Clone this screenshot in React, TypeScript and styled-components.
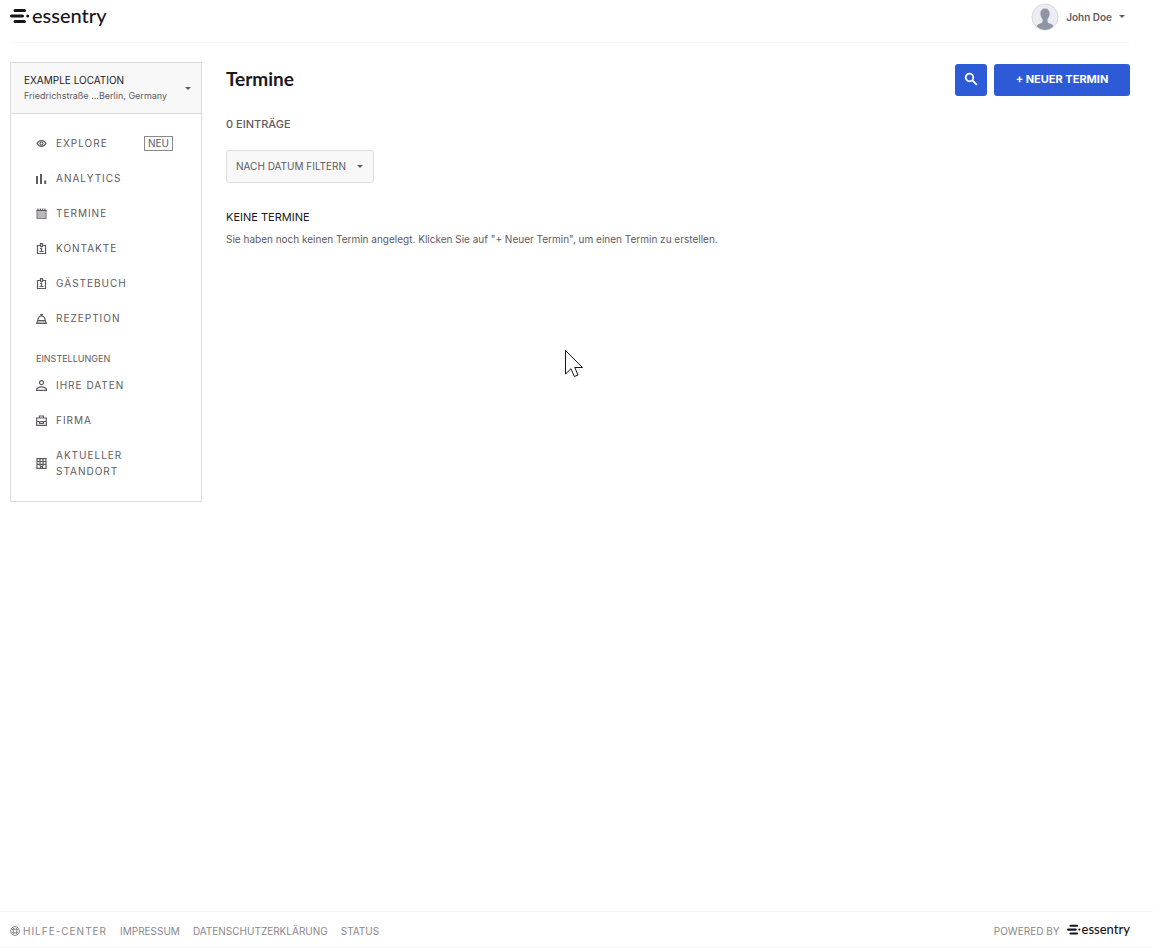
import React from "react";
import styled, { createGlobalStyle } from "styled-components";

const GlobalStyle = createGlobalStyle`
  *, *::before, *::after { box-sizing: border-box; }
  body {
    margin: 0;
    background: #fff;
    color: #5f5a61;
    font-family: Inter, "Liberation Sans", sans-serif;
    font-size: 10px;
    line-height: 16px;
  }
  h1, h2, p, ul { margin: 0; padding: 0; }
  ul { list-style: none; }
  button, select { font: inherit; color: inherit; cursor: pointer; }
  a { color: inherit; text-decoration: none; }
  svg { display: block; flex: none; }
`;

const Page = styled.div`
  position: relative;
  display: flex;
  flex-direction: column;
  min-height: 100vh;
`;

const Header = styled.header`
  display: flex;
  align-items: center;
  justify-content: space-between;
  height: 43px;
  margin: 0 23px 0 10px;
  padding-bottom: 9px;
  border-bottom: 1px solid #f6f6f6;
`;

const Brand = styled.a<{ $small?: boolean }>`
  display: flex;
  align-items: center;
  gap: ${(p) => (p.$small ? 1 : 2)}px;
  padding-bottom: 2px;
  color: #17151c;
  font-family: Lato, sans-serif;
  font-size: ${(p) => (p.$small ? 13 : 20)}px;
  font-weight: 500;
  line-height: ${(p) => (p.$small ? 16 : 24)}px;
`;

const BrandName = styled.span`
  padding-bottom: 2px;
`;

const UserButton = styled.button`
  display: flex;
  align-items: center;
  gap: 7px;
  padding: 0 5px 0 0;
  border: 0;
  background: none;
  font-weight: 600;
`;

const Body = styled.div`
  display: flex;
  flex: 1;
  align-items: flex-start;
  gap: 24px;
  padding: 19px 23px 40px 10px;
`;

const Sidebar = styled.aside`
  flex: none;
  width: 192px;
  border: 1px solid #dcdcdc;
`;

const LocationButton = styled.button`
  display: flex;
  align-items: center;
  justify-content: space-between;
  width: 100%;
  height: 51px;
  padding: 0 10px 0 13px;
  border: 0;
  border-bottom: 1px solid #dcdcdc;
  background: #f8f8f8;
  text-align: left;
`;

const LocationName = styled.span`
  display: block;
  color: #1d1a24;
`;

const LocationAddress = styled.span`
  display: block;
  font-size: 9px;
`;

const Nav = styled.nav`
  padding: 12px 25px;
`;

const NavLink = styled.a`
  display: flex;
  align-items: center;
  gap: 9px;
  padding: 9px 0 10px;
  letter-spacing: 1px;
`;

const NavText = styled.span`
  flex: 1;
`;

const Badge = styled.span`
  margin-right: 3px;
  padding: 0 3px;
  border: 1px solid #8d888e;
  line-height: 13px;
  letter-spacing: 0;
`;

const NavHeading = styled.h2`
  margin: 15px 0 1px;
  font-size: 9px;
  font-weight: 400;
`;

const Main = styled.main`
  flex: 1;
  min-width: 0;
`;

const TitleRow = styled.div`
  display: flex;
  align-items: center;
  justify-content: space-between;
  height: 35px;
`;

const Title = styled.h1`
  padding-bottom: 2px;
  color: #1a1722;
  font-family: Lato, sans-serif;
  font-size: 19px;
  font-weight: 700;
  line-height: 24px;
`;

const Actions = styled.div`
  display: flex;
  gap: 7px;
`;

const PrimaryButton = styled.button<{ $icon?: boolean }>`
  display: flex;
  align-items: center;
  justify-content: center;
  width: ${(p) => (p.$icon ? 32 : 136)}px;
  height: 32px;
  padding: 0 0 1px;
  border: 0;
  border-radius: 3px;
  background: #2d5bd7;
  color: #fff;
  font-size: 11px;
  font-weight: 700;
`;

const Count = styled.p`
  margin-top: 19px;
  font-size: 11px;
  font-weight: 500;
`;

const FilterField = styled.div`
  position: relative;
  width: 148px;
  margin: 18px 0 26px;
`;

const FilterSelect = styled.select`
  display: block;
  width: 100%;
  height: 33px;
  padding: 0 24px 1px 9px;
  border: 1px solid #dedede;
  border-radius: 3px;
  background: #f8f8f8;
  appearance: none;
`;

const FilterCaret = styled.span`
  position: absolute;
  top: 15px;
  right: 11px;
  pointer-events: none;
`;

const EmptyTitle = styled.h2`
  color: #1a1722;
  font-size: 11px;
  font-weight: 400;
`;

const EmptyText = styled.p`
  margin-top: 6px;
`;

const Footer = styled.footer`
  display: flex;
  align-items: center;
  justify-content: space-between;
  height: 37px;
  padding: 3px 23px 0 10px;
  border: solid #f6f6f6;
  border-width: 1px 0;
  color: #8b878d;
`;

const FooterLinks = styled.div`
  display: flex;
  align-items: center;
  gap: 13px;
`;

const HelpLink = styled.a`
  display: flex;
  align-items: center;
  gap: 3px;
  letter-spacing: 1px;
`;

const PoweredBy = styled.div`
  display: flex;
  align-items: center;
  gap: 7px;
`;

const Pointer = styled.svg`
  position: absolute;
  top: 350px;
  left: 565px;
  pointer-events: none;
`;

const Mark = ({ width }: { width: number }) => (
  <svg width={width} viewBox="0 0 20 16" stroke="currentColor" strokeWidth="3" strokeLinecap="round" aria-hidden="true">
    <path d="M5 2.5H14.5M1.5 8H12.5M5 13.5H14.5" />
    <circle cx="17.7" cy="8" r="1.5" fill="currentColor" stroke="none" />
  </svg>
);

const Logo = ({ small }: { small?: boolean }) => (
  <Brand href="#" $small={small}>
    <Mark width={small ? 14 : 20} />
    <BrandName>essentry</BrandName>
  </Brand>
);

const Caret = () => (
  <svg width="6" height="3" viewBox="0 0 6 3" aria-hidden="true">
    <path d="M0 0H6L3 3Z" fill="currentColor" />
  </svg>
);

const Avatar = () => (
  <svg width="28" height="28" viewBox="0 0 28 28" aria-hidden="true">
    <circle cx="14" cy="14" r="13" fill="#ececf3" stroke="#d9d9de" />
    <path
      d="M14 5.5c3 0 4.600 2 4.600 5 0 2.700-1 4.300-2.100 5.500v2.500c0 1.500 1.600 1.900 3.600 2.600 1.300.5 2 1.200 2.300 2.200A13 13 0 0 1 14 27a13 13 0 0 1-8.400-3.700c.3-1 1-1.700 2.300-2.200 2-.7 3.600-1.100 3.600-2.600V16c-1.100-1.200-2.100-2.800-2.100-5.500 0-3 1.600-5 4.600-5Z"
      fill="#8f96a3"
    />
  </svg>
);

type IconName = "eye" | "bars" | "calendar" | "badge" | "bell" | "user" | "case" | "building";

const icons: Record<IconName, React.ReactNode> = {
  eye: (
    <>
      <path d="M1 5.500C2 3.700 3.500 2.700 5.500 2.700S9 3.700 10 5.500C9 7.300 7.500 8.300 5.500 8.300S2 7.300 1 5.500Z" />
      <circle cx="5.500" cy="5.500" r="1.500" />
    </>
  ),
  bars: <path d="M1 11V3M5 11V1M9.200 11V7.500" strokeWidth="2" />,
  calendar: (
    <>
      <path d="M1 2.500H10V10.500H1Z" fill="#bbb8bf" stroke="#86818a" />
      <path d="M.5 2.500H10.500M2 .5V2M4.300 .5V2M6.700 .5V2M9 .5V2" />
    </>
  ),
  badge: (
    <>
      <path d="M4 2.500H1.500V10.500H9.500V2.500H7" />
      <path d="M4.500 3.500V.7H6.500V3.500Z" />
      <path d="M5.500 4.500V8M3.500 8.500H7.500M4 5.500H6" />
    </>
  ),
  bell: (
    <>
      <path d="M1.800 7.500C2 4.500 3.500 3 5.500 3S9 4.500 9.200 7.500M4 1.700H7M5.500 1.500V3" />
      <path d="M.6 10.500L1.800 7.500H9.200L10.400 10.500Z" fill="#bbb8bf" />
    </>
  ),
  user: (
    <>
      <circle cx="5.500" cy="2.700" r="2" />
      <path d="M.6 10.300V9C1.500 7.300 3.500 6.800 5.500 6.800S9.500 7.300 10.400 9V10.300Z" />
    </>
  ),
  case: (
    <>
      <path d="M.7 3H10.300V10.300H.7ZM3.500 3V1H7.500V3M1 6.500H3.500M7.500 6.500H10" />
      <path d="M3.500 6.500H7.500V8.300H3.500Z" />
    </>
  ),
  building: <path d="M1 .7H10V10.300H1ZM4 .7V8M7 .7V8M1 3.500H10M1 6.300H10M4.500 10V8.500H6.500V10" />,
};

const NavIcon = ({ name }: { name: IconName }) => (
  <svg width="11" height="11" viewBox="0 0 11 11" fill="none" stroke="currentColor" strokeWidth="1.200" aria-hidden="true">
    {icons[name]}
  </svg>
);

interface Entry {
  label: string;
  icon: IconName;
  badge?: string;
}

const primary: Entry[] = [
  { label: "EXPLORE", icon: "eye", badge: "NEU" },
  { label: "ANALYTICS", icon: "bars" },
  { label: "TERMINE", icon: "calendar" },
  { label: "KONTAKTE", icon: "badge" },
  { label: "GÄSTEBUCH", icon: "badge" },
  { label: "REZEPTION", icon: "bell" },
];

const settings: Entry[] = [
  { label: "IHRE DATEN", icon: "user" },
  { label: "FIRMA", icon: "case" },
  { label: "AKTUELLER STANDORT", icon: "building" },
];

const NavList = ({ entries }: { entries: Entry[] }) => (
  <ul>
    {entries.map((entry) => (
      <li key={entry.label}>
        <NavLink href="#">
          <NavIcon name={entry.icon} />
          <NavText>{entry.label}</NavText>
          {entry.badge && <Badge>{entry.badge}</Badge>}
        </NavLink>
      </li>
    ))}
  </ul>
);

export default function App() {
  return (
    <Page>
      <GlobalStyle />
      <Header>
        <Logo />
        <UserButton type="button">
          <Avatar />
          John Doe
          <Caret />
        </UserButton>
      </Header>
      <Body>
        <Sidebar>
          <LocationButton type="button">
            <span>
              <LocationName>EXAMPLE LOCATION</LocationName>
              <LocationAddress>Friedrichstraße ...Berlin, Germany</LocationAddress>
            </span>
            <Caret />
          </LocationButton>
          <Nav>
            <NavList entries={primary} />
            <NavHeading>EINSTELLUNGEN</NavHeading>
            <NavList entries={settings} />
          </Nav>
        </Sidebar>
        <Main>
          <TitleRow>
            <Title>Termine</Title>
            <Actions>
              <PrimaryButton type="button" $icon aria-label="Suchen">
                <svg width="14" height="14" viewBox="0 0 14 14" fill="none" stroke="currentColor" strokeWidth="1.800" aria-hidden="true">
                  <circle cx="5.500" cy="5.500" r="3.800" />
                  <path d="M8.200 8.200L12.800 12.800" />
                </svg>
              </PrimaryButton>
              <PrimaryButton type="button">+ NEUER TERMIN</PrimaryButton>
            </Actions>
          </TitleRow>
          <Count>0 EINTRÄGE</Count>
          <FilterField>
            <FilterSelect aria-label="Nach Datum filtern">
              <option>NACH DATUM FILTERN</option>
            </FilterSelect>
            <FilterCaret>
              <Caret />
            </FilterCaret>
          </FilterField>
          <EmptyTitle>KEINE TERMINE</EmptyTitle>
          <EmptyText>
            Sie haben noch keinen Termin angelegt. Klicken Sie auf "+ Neuer Termin", um einen Termin zu erstellen.
          </EmptyText>
        </Main>
      </Body>
      <Footer>
        <FooterLinks>
          <HelpLink href="#">
            <svg width="10" height="10" viewBox="0 0 10 10" fill="none" stroke="currentColor" aria-hidden="true">
              <circle cx="5" cy="5" r="4.400" />
              <circle cx="5" cy="5" r="2" />
              <path d="M1.500 3L3.500 4M3 1.500L4 3.500M8.500 3L6.500 4M7 1.500L6 3.500M1.500 7L3.500 6M3 8.500L4 6.500M8.500 7L6.500 6M7 8.500L6 6.500" />
            </svg>
            HILFE-CENTER
          </HelpLink>
          <a href="#">IMPRESSUM</a>
          <a href="#">DATENSCHUTZERKLÄRUNG</a>
          <a href="#">STATUS</a>
        </FooterLinks>
        <PoweredBy>
          POWERED BY
          <Logo small />
        </PoweredBy>
      </Footer>
      <Pointer width="19" height="28" viewBox="0 0 19 28" aria-hidden="true">
        <path d="M.5 .5V24L6 18.700L9.300 26.500L13 25L9.800 17.500H17.500Z" fill="#fff" stroke="#17151c" />
      </Pointer>
    </Page>
  );
}
